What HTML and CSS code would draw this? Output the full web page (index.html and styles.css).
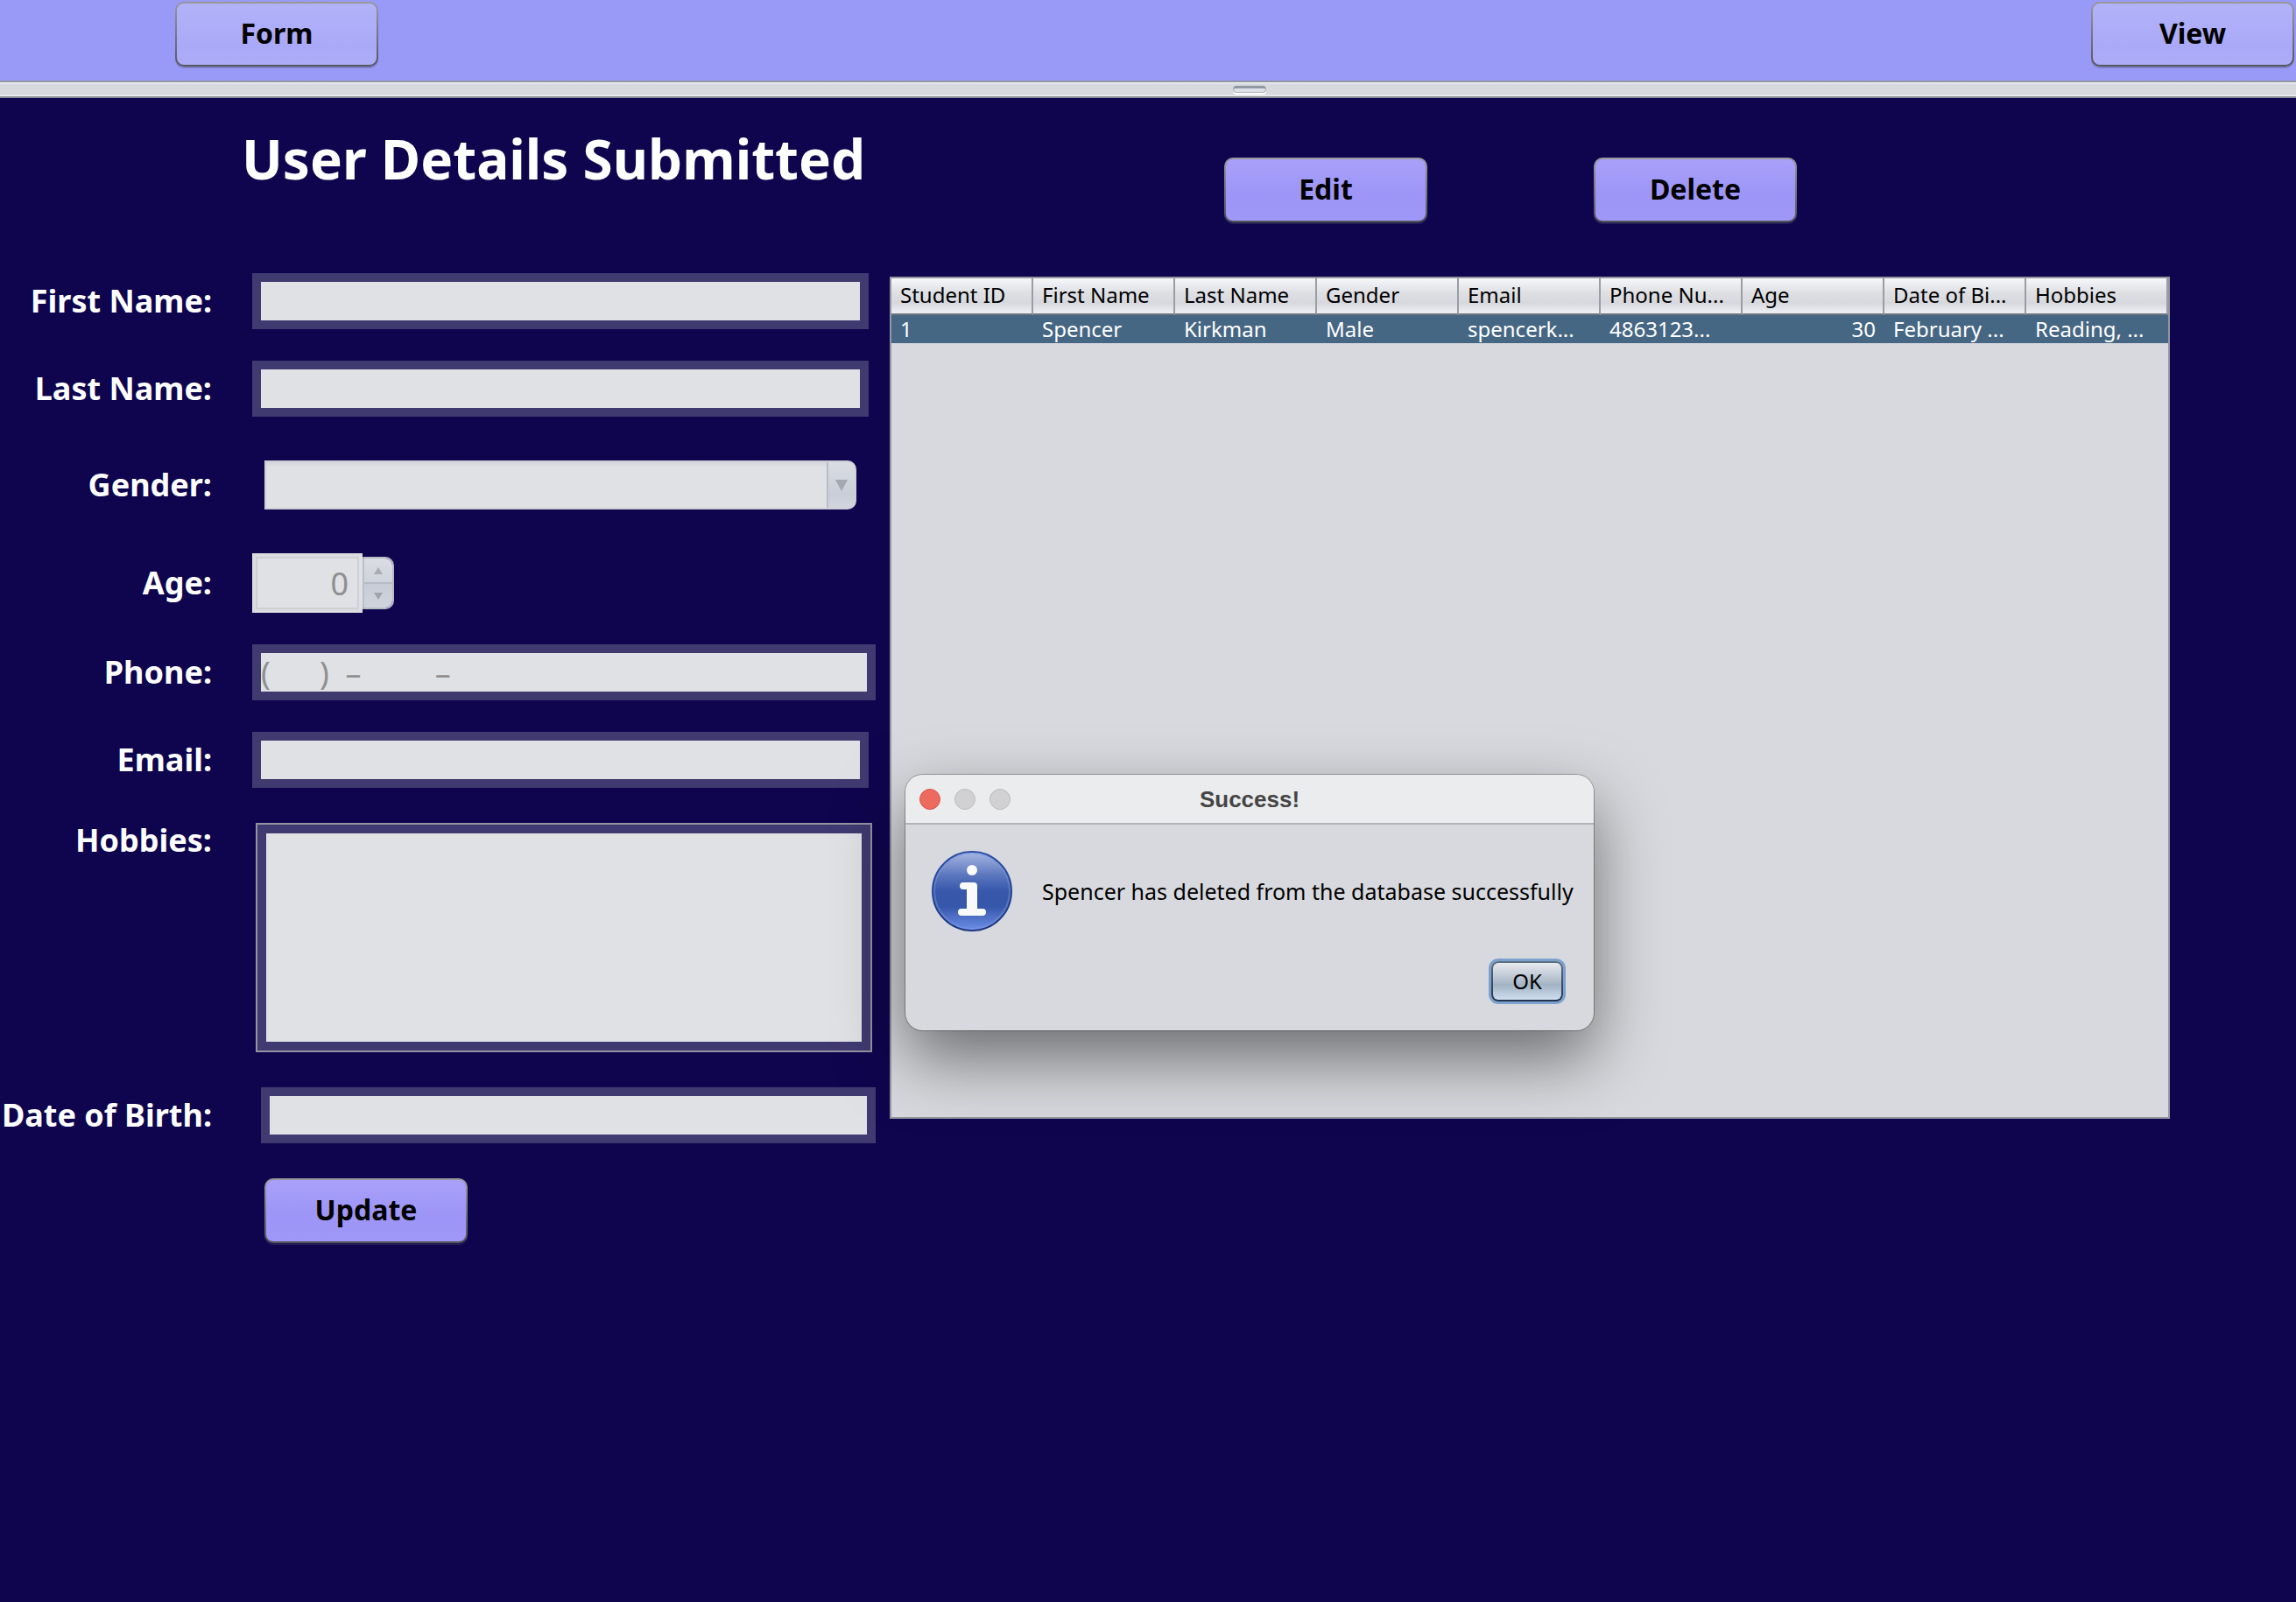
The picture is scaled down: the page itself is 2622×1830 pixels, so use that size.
FILE: index.html
```html
<!DOCTYPE html>
<html lang="en">
<head>
<meta charset="utf-8">
<title>User Details</title>
<link rel="stylesheet" href="styles.css">
</head>
<body>
<nav class="topbar">
  <button class="btn btn-light" type="button">Form</button>
  <button class="btn btn-light" type="button">View</button>
</nav>
<div class="divider" role="separator"><span class="grip"></span></div>
<main class="content">
  <form class="details">
    <h1 class="title">User Details Submitted</h1>
    <div class="row">
      <label for="first">First Name:</label>
      <input class="field" id="first" type="text" disabled>
    </div>
    <div class="row">
      <label for="last">Last Name:</label>
      <input class="field" id="last" type="text" disabled>
    </div>
    <div class="row row-spaced">
      <label for="gender">Gender:</label>
      <div class="combo">
        <select id="gender" disabled><option></option></select>
        <span class="combo-arrow"><svg width="14" height="14" viewBox="0 0 14 14"><path d="M0 1h14L7 14z" fill="#a3a8b1"/></svg></span>
      </div>
    </div>
    <div class="row row-spaced">
      <label for="age">Age:</label>
      <div class="spinner">
        <input id="age" type="number" value="0" disabled>
        <div class="steps">
          <button type="button" aria-label="Increase age" disabled><svg width="10" height="8" viewBox="0 0 10 8"><path d="M5 0l5 8H0z" fill="#a9adb3"/></svg></button>
          <button type="button" aria-label="Decrease age" disabled><svg width="10" height="8" viewBox="0 0 10 8"><path d="M0 0h10L5 8z" fill="#9fa3ab"/></svg></button>
        </div>
      </div>
    </div>
    <div class="row">
      <label for="phone">Phone:</label>
      <input class="field field-wide" id="phone" type="text" value="(      )  –         –" disabled>
    </div>
    <div class="row">
      <label for="email">Email:</label>
      <input class="field" id="email" type="text" disabled>
    </div>
    <div class="row row-block">
      <label for="hobbies">Hobbies:</label>
      <div class="area"><textarea id="hobbies" disabled></textarea></div>
    </div>
    <div class="row row-block">
      <label for="dob">Date of Birth:</label>
      <input class="field field-date" id="dob" type="text" disabled>
    </div>
    <div class="submit">
      <button class="btn" type="button">Update</button>
    </div>
  </form>
  <section class="records">
    <div class="actions">
      <button class="btn" type="button">Edit</button>
      <button class="btn" type="button">Delete</button>
    </div>
    <div class="pane">
      <table>
        <thead>
          <tr><th>Student ID</th><th>First Name</th><th>Last Name</th><th>Gender</th><th>Email</th><th>Phone Nu...</th><th>Age</th><th>Date of Bi...</th><th>Hobbies</th></tr>
        </thead>
        <tbody>
          <tr><td>1</td><td>Spencer</td><td>Kirkman</td><td>Male</td><td>spencerk...</td><td>4863123...</td><td class="num">30</td><td>February ...</td><td>Reading, ...</td></tr>
        </tbody>
      </table>
    </div>
  </section>
</main>
<div class="dialog" role="dialog" aria-labelledby="dialog-title">
  <header class="dialog-bar">
    <div class="lights"><span class="light light-close"></span><span class="light"></span><span class="light"></span></div>
    <h2 id="dialog-title">Success!</h2>
  </header>
  <div class="dialog-body">
    <svg class="info" width="92" height="92" viewBox="0 0 92 92">
      <defs>
        <linearGradient id="ball" x1="0" y1="0" x2="0" y2="1">
          <stop offset="0" stop-color="#a9b8e4"/>
          <stop offset=".3" stop-color="#5a76bd"/>
          <stop offset=".5" stop-color="#3757ab"/>
          <stop offset=".7" stop-color="#3757ab"/>
          <stop offset="1" stop-color="#6d90e8"/>
        </linearGradient>
        <linearGradient id="rim" x1="0" y1="0" x2="0" y2="1">
          <stop offset="0" stop-color="#2f50a5"/>
          <stop offset="1" stop-color="#1c3880"/>
        </linearGradient>
      </defs>
      <circle cx="46" cy="46" r="45" fill="url(#ball)" stroke="url(#rim)" stroke-width="2"/>
      <circle cx="46" cy="46" r="43" fill="none" stroke="#7f9be0" stroke-opacity=".45" stroke-width="2"/>
      <circle cx="46" cy="22" r="6" fill="#fafafa"/>
      <path d="M36 36h12q4 0 4 4v26h6q4 0 4 4t-4 4H34q-4 0-4-4t4-4h6V44h-4q-4 0-4-4t4-4z" fill="#fafafa"/>
    </svg>
    <p>Spencer has deleted from the database successfully</p>
  </div>
  <div class="dialog-foot"><button class="ok" type="button">OK</button></div>
</div>
</body>
</html>
```
FILE: styles.css
```css
* { box-sizing: border-box; }

body {
  margin: 0;
  min-height: 100vh;
  position: relative;
  background: #0e054e;
  color: #000;
  font-family: "Noto Sans", "Open Sans", sans-serif;
  font-size: 24px;
}

button, input, select, textarea { font: inherit; margin: 0; }

.btn {
  width: 232px;
  height: 74px;
  padding: 0 0 2px;
  border: 2px solid transparent;
  border-radius: 10px;
  background:
    linear-gradient(#a8a0f8, #9d95f7 60%, #9f98f8) padding-box,
    linear-gradient(#98999c, #55565c) border-box;
  box-shadow: 0 2px 0 rgba(80, 80, 100, .35);
  color: #000;
  font-size: 32px;
  font-weight: 700;
  line-height: 40px;
}

.btn-light {
  background:
    linear-gradient(#b2b2f9, #a9a9f8 70%, #acacf8) padding-box,
    linear-gradient(#98999c, #55565c) border-box;
}

.topbar {
  display: flex;
  justify-content: space-between;
  height: 92px;
  padding: 2px 2px 0 200px;
  background: #9999f7;
}

.divider {
  display: flex;
  justify-content: center;
  height: 20px;
  padding: 4px 0 0 232px;
  border-top: 2px solid #9297a3;
  border-bottom: 2px solid #888d97;
  background: linear-gradient(#eceef1 0 1px, #d8d9de 2px 14px, #eceef1 15px);
}

.grip {
  width: 38px;
  height: 8px;
  border: 1px solid #a9aeb7;
  border-top: 3px solid #9298a2;
  border-radius: 4px;
  background: #dde1e8;
  box-shadow: 0 2px 0 #fff;
}

.content {
  display: grid;
  grid-template-columns: 1016px 1fr;
}

.title {
  margin: 0;
  height: 200px;
  padding: 29px 0 0 276px;
  color: #fff;
  font-size: 62px;
  line-height: 80px;
  white-space: nowrap;
}

.row {
  display: flex;
  align-items: center;
  gap: 46px;
  margin-bottom: 36px;
}

.row label {
  display: flex;
  justify-content: flex-end;
  flex: 0 0 242px;
  color: #fff;
  font-size: 36px;
  font-weight: 700;
  line-height: 40px;
  white-space: nowrap;
}

.row-spaced { margin: 50px 0; }
.row-spaced + .row-spaced { margin-bottom: 36px; }

.row-block {
  align-items: flex-start;
  margin: 40px 0;
}

.field {
  width: 704px;
  height: 64px;
  padding: 0;
  border: 10px solid #3f3a70;
  border-radius: 0;
  background: #dfe1e5;
  color: #8f8f8f;
  font-size: 36px;
}

.field-wide { width: 712px; }

.field-date {
  width: 702px;
  margin-left: 10px;
}

.row-block:has(.field-date) { align-items: center; }

.combo {
  display: flex;
  width: 676px;
  height: 56px;
  margin-left: 14px;
  border: 2px solid #cdcfd6;
  border-radius: 0 10px 10px 0;
  overflow: hidden;
  background: #cdcfd6;
}

.combo select {
  flex: 1;
  appearance: none;
  border: 0;
  border-radius: 0;
  background: linear-gradient(#d5d6db, #dfe1e5 6px);
  opacity: 1;
}

.combo-arrow {
  display: flex;
  align-items: center;
  justify-content: center;
  width: 32px;
  border-left: 2px solid #b8bdc5;
  background: linear-gradient(#dadde2, #c9ced8 70%, #d0d5de);
}

.spinner {
  display: flex;
  align-items: center;
}

.spinner input {
  appearance: textfield;
  width: 126px;
  height: 68px;
  padding: 0 16px 0 0;
  border: 4px solid #dadce0;
  border-right-width: 0;
  border-radius: 0;
  outline: 2px solid #cdcfd5;
  outline-offset: -6px;
  background: #dfe1e5;
  color: #8f8f8f;
  font-size: 36px;
  text-align: right;
}

.spinner input::-webkit-inner-spin-button { appearance: none; margin: 0; }

.steps {
  display: flex;
  flex-direction: column;
  width: 36px;
  height: 60px;
  border: 2px solid #b6bcc6;
  border-left-color: #b8c0ca;
  border-radius: 0 10px 10px 0;
  overflow: hidden;
}

.steps button {
  display: flex;
  align-items: center;
  justify-content: center;
  flex: 1;
  padding: 0;
  border: 0;
  background: linear-gradient(#dadde2, #cfd3db);
}

.steps button + button {
  border-top: 2px solid #b6bcc6;
  background: linear-gradient(#c8ccd6, #cfd4dd);
}

.area {
  width: 704px;
  height: 262px;
  margin-left: 4px;
  border: 2px solid #9394a0;
}

.area textarea {
  display: block;
  width: 100%;
  height: 100%;
  border: 10px solid #3f3a70;
  border-radius: 0;
  background: #dfe1e5;
  resize: none;
}

.submit { padding-left: 302px; }

.records { padding: 68px 144px 0 0; }

.actions {
  display: flex;
  gap: 190px;
  padding-left: 382px;
  margin-bottom: 62px;
}

.pane {
  height: 962px;
  border: 2px solid #9297a1;
  background: #d8d9de;
}

table {
  width: 100%;
  table-layout: fixed;
  border-collapse: separate;
  border-spacing: 0;
}

th, td {
  padding: 0 10px;
  overflow: hidden;
  text-align: left;
  font-weight: 400;
  white-space: nowrap;
}

th {
  height: 42px;
  padding-bottom: 2px;
  border-right: 2px solid #9a9da6;
  border-bottom: 2px solid #70757e;
  background: linear-gradient(#f6f7f9, #dfe0e4 40%, #d6d8dd 70%, #eef1f5);
  line-height: 38px;
}

td {
  height: 32px;
  background: #466784;
  color: #fff;
  line-height: 32px;
}

.num { text-align: right; }

.dialog {
  position: absolute;
  top: 885px;
  left: 1034px;
  width: 786px;
  height: 292px;
  border-radius: 20px;
  overflow: hidden;
  background: #d8d9de;
  box-shadow: 0 0 0 1px rgba(0, 0, 0, .28), 0 32px 76px rgba(0, 0, 0, .5);
}

.dialog-bar {
  display: grid;
  grid-template-columns: 1fr auto 1fr;
  align-items: center;
  height: 57px;
  padding: 0 16px;
  border-bottom: 2px solid #b2b4ba;
  background: #ebecee;
}

.dialog-bar h2 {
  margin: 0;
  color: #454545;
  font: 700 26px/32px "Liberation Sans", Arial, sans-serif;
}

.lights {
  display: flex;
  gap: 16px;
}

.light {
  width: 24px;
  height: 24px;
  border: 1px solid #bcbcbe;
  border-radius: 50%;
  background: #d1d1d3;
}

.light-close {
  border-color: #d9574c;
  background: #ec6a5e;
}

.dialog-body {
  display: flex;
  align-items: center;
  gap: 34px;
  padding: 30px 0 0 30px;
}

.dialog-body p {
  margin: 0;
  font-size: 25px;
  line-height: 32px;
  white-space: nowrap;
}

.dialog-foot {
  display: flex;
  justify-content: flex-end;
  padding: 34px 35px 0 0;
}

.ok {
  width: 82px;
  height: 46px;
  padding: 0 0 2px;
  border: 2px solid transparent;
  border-radius: 8px;
  background:
    linear-gradient(#e8eaee, #b5c1cf 45%, #a2b3c4 60%, #cfdfef) padding-box,
    linear-gradient(#5f7081, #22324a) border-box;
  box-shadow: 0 0 0 3px #7ba2cf;
}
```
